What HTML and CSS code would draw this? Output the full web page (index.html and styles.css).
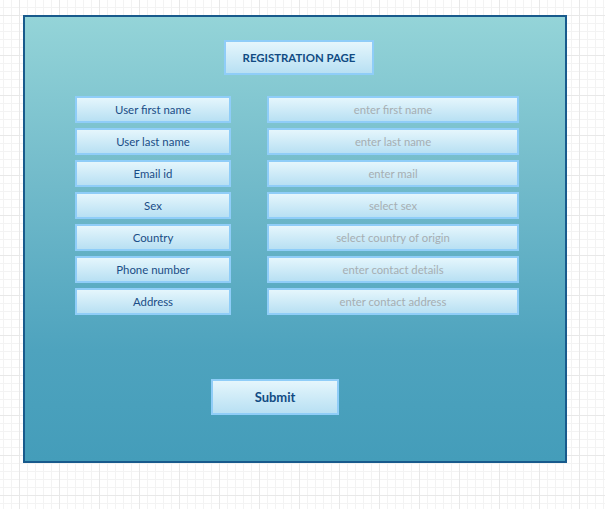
FILE: index.html
```html
<!DOCTYPE html>
<html>
<head>
<meta charset="utf-8">
<link rel="stylesheet" href="styles.css">
</head>
<body>
<div class="canvas">
  <div class="panel">
    <div class="title box">REGISTRATION PAGE</div>
    <div class="form">
      <div class="box label">User first name</div>
      <div class="box field">enter first name</div>
      <div class="box label">User last name</div>
      <div class="box field">enter last name</div>
      <div class="box label">Email id</div>
      <div class="box field">enter mail</div>
      <div class="box label">Sex</div>
      <div class="box field">select sex</div>
      <div class="box label">Country</div>
      <div class="box field">select country of origin</div>
      <div class="box label">Phone number</div>
      <div class="box field">enter contact details</div>
      <div class="box label">Address</div>
      <div class="box field">enter contact address</div>
    </div>
    <div class="box submit">Submit</div>
  </div>
</div>
</body>
</html>
```
FILE: styles.css
```css
html, body {
  margin: 0;
  padding: 0;
}
body {
  width: 605px;
  height: 509px;
  overflow: hidden;
  font-family: Lato, "Liberation Sans", sans-serif;
  background-color: #ffffff;
  background-image:
    linear-gradient(to right, #e8e8e8 1px, transparent 1px),
    linear-gradient(to bottom, #e8e8e8 1px, transparent 1px),
    linear-gradient(to right, #f3f3f3 1px, transparent 1px),
    linear-gradient(to bottom, #f3f3f3 1px, transparent 1px);
  background-size: 40px 40px, 40px 40px, 8px 8px, 8px 8px;
  background-position: 19px 15px, 19px 15px, 3px 7px, 3px 7px;
}
.canvas {
  padding: 15px 0 0 23px;
}
.panel {
  box-sizing: border-box;
  width: 544px;
  height: 448px;
  border: 2px solid #185a8c;
  background: linear-gradient(to bottom, #94d4d8 0%, #74bccb 35%, #4ea3be 75%, #449dba 100%);
  display: flex;
  flex-direction: column;
  align-items: flex-start;
}
.box {
  box-sizing: border-box;
  border: 2px solid #8fcdf8;
  background: linear-gradient(to bottom, #e5f6fc, #b8e0f3);
  display: flex;
  align-items: center;
  justify-content: center;
  white-space: nowrap;
}
.title {
  margin: 23px 0 0 199px;
  width: 150px;
  height: 35px;
  font-size: 11.4px;
  font-weight: bold;
  color: #114b83;
}
.form {
  margin: 21px 0 0 50px;
  display: grid;
  grid-template-columns: 156px 252px;
  grid-auto-rows: 27px;
  column-gap: 36px;
  row-gap: 5px;
}
.label {
  font-size: 11.4px;
  color: #1a4d86;
}
.field {
  font-size: 11.3px;
  color: #a6aeb2;
}
.submit {
  margin: 64px 0 0 186px;
  width: 128px;
  height: 36px;
  font-size: 13px;
  font-weight: bold;
  color: #114b83;
}
```
